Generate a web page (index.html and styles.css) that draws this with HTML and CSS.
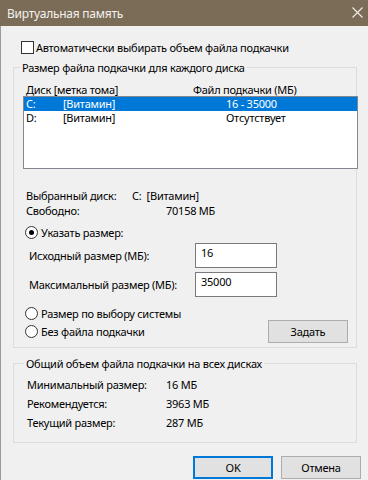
FILE: index.html
```html
<!DOCTYPE html>
<html lang="ru">
<head>
  <meta charset="UTF-8">
  <title>Виртуальная память</title>
  <link rel="stylesheet" href="styles.css">
</head>
<body>
<div class="window">

  <!-- заголовок окна -->
  <div class="titlebar">
    <span class="title">Виртуальная память</span>
    <svg class="close" width="11" height="11" viewBox="0 0 11 11">
      <path d="M0.5 0.5 L10.5 10.5 M10.5 0.5 L0.5 10.5" stroke="#f2efea" stroke-width="1.1" fill="none"/>
    </svg>
  </div>

  <div class="content">
    <div class="auto-row">
      <span class="checkbox"></span>
      <span>Автоматически выбирать объем файла подкачки</span>
    </div>

    <fieldset class="group group-disks">
      <legend>Размер файла подкачки для каждого диска</legend>

      <div class="list-head">
        <span class="col-disk">Диск [метка тома]</span>
        <span>Файл подкачки (МБ)</span>
      </div>

      <div class="listbox">
        <div class="list-row selected">
          <span class="col-letter">C:</span>
          <span class="col-label">[Витамин]</span>
          <span>16 - 35000</span>
        </div>
        <div class="list-row">
          <span class="col-letter">D:</span>
          <span class="col-label">[Витамин]</span>
          <span>Отсутствует</span>
        </div>
      </div>

      <div class="info">
        <div class="info-row">
          <span class="info-label sel">Выбранный диск:</span>
          <span>C:&nbsp;&nbsp;[Витамин]</span>
        </div>
        <div class="info-row">
          <span class="info-label free">Свободно:</span>
          <span>70158 МБ</span>
        </div>
      </div>

      <div class="radio-row first">
        <span class="radio checked"></span>
        <span>Указать размер:</span>
      </div>

      <div class="size-row">
        <span class="size-label">Исходный размер (МБ):</span>
        <div class="input">16</div>
      </div>
      <div class="size-row">
        <span class="size-label">Максимальный размер (МБ):</span>
        <div class="input">35000</div>
      </div>

      <div class="radio-row system">
        <span class="radio"></span>
        <span>Размер по выбору системы</span>
      </div>
      <div class="last-row">
        <div class="radio-row">
          <span class="radio"></span>
          <span>Без файла подкачки</span>
        </div>
        <button class="btn btn-set">Задать</button>
      </div>
    </fieldset>

    <fieldset class="group group-total">
      <legend>Общий объем файла подкачки на всех дисках</legend>
      <div class="total-row">
        <span class="total-label">Минимальный размер:</span>
        <span>16 МБ</span>
      </div>
      <div class="total-row">
        <span class="total-label">Рекомендуется:</span>
        <span>3963 МБ</span>
      </div>
      <div class="total-row">
        <span class="total-label">Текущий размер:</span>
        <span>287 МБ</span>
      </div>
    </fieldset>

    <div class="buttons">
      <button class="btn btn-ok">OK</button>
      <button class="btn">Отмена</button>
    </div>
  </div>

</div>
</body>
</html>
```

FILE: styles.css
```css
html, body {
  margin: 0;
  padding: 0;
  background: #f0f0f0;
}
body {
  font-family: "Noto Sans", "Open Sans", sans-serif;
  font-size: 11px;
  letter-spacing: -0.25px;
  color: #000;
}
.window {
  height: 480px;
  border-left: 1px solid #9a9a9a;
  box-sizing: border-box;
}
.titlebar {
  height: 26px;
  background: #7b6c58;
  color: #f4f1ec;
  display: flex;
  align-items: center;
  justify-content: space-between;
  padding: 0 5px 0 7px;
  font-size: 12px;
  margin-left: -1px;
}
.close {
  margin-top: -1px;
}
.content {
  padding-top: 14px;
}
.auto-row {
  display: flex;
  align-items: center;
  height: 15px;
  padding-left: 20px;
  gap: 2px;
}
.checkbox {
  width: 11px;
  height: 11px;
  border: 1px solid #333;
  background: #fff;
}
.group {
  border: 1px solid #dcdcdc;
  margin: 0 11px 0 12px;
  min-width: 0;
}
.group legend {
  padding: 0 2px;
  margin-left: -3px;
  line-height: 15px;
}
.group-disks {
  margin-top: 5px;
  padding: 9px 0 4px 9px;
}
.list-head {
  display: flex;
  line-height: 12px;
  height: 12px;
  padding-left: 3px;
}
.col-disk {
  width: 167px;
}
.listbox {
  height: 71px;
  margin-right: -2px;
  border: 1px solid #828790;
  background: #fff;
}
.list-row {
  display: flex;
  height: 14px;
  line-height: 14px;
  padding-left: 2px;
}
.list-row.selected {
  background: #0078d7;
  color: #fff;
}
.col-letter {
  width: 37px;
}
.col-label {
  width: 163px;
}
.info {
  margin-top: 19px;
  padding-left: 3px;
}
.info-row {
  display: flex;
  line-height: 15px;
}
.info-label.sel {
  width: 106px;
}
.info-label.free {
  width: 140px;
}
.radio-row {
  display: flex;
  align-items: center;
  height: 13px;
  padding-left: 2px;
  gap: 3px;
}
.radio-row.first {
  margin-top: 8px;
}
.radio {
  width: 11px;
  height: 11px;
  border: 1px solid #333;
  border-radius: 50%;
  background: #fff;
  position: relative;
}
.radio.checked::after {
  content: "";
  position: absolute;
  left: 3px;
  top: 3px;
  width: 5px;
  height: 5px;
  border-radius: 50%;
  background: #000;
}
.size-row {
  display: flex;
  align-items: center;
  margin-top: 4px;
  padding-left: 6px;
}
.size-row:first-of-type {
  margin-top: 0;
}
.size-label {
  width: 166px;
}
.input {
  width: 75px;
  border: 1px solid #7a7a7a;
  background: #fff;
  padding: 1px 0 0 5px;
  height: 22px;
  line-height: 16px;
}
.radio-row.system {
  margin-top: 10px;
}
.last-row {
  display: flex;
  align-items: center;
  justify-content: space-between;
  padding-right: 8px;
}
.btn {
  font-family: "Noto Sans", "Open Sans", sans-serif;
  font-size: 11px;
  letter-spacing: -0.25px;
  width: 80px;
  height: 23px;
  background: #e1e1e1;
  border: 1px solid #adadad;
  color: #000;
  padding: 0;
}
.btn-ok {
  border: 2px solid #0078d7;
}
.group-total {
  margin-top: 8px;
  padding: 4px 0 10px 13px;
}
.total-row {
  display: flex;
  line-height: 19px;
}
.total-label {
  width: 139px;
}
.buttons {
  display: flex;
  justify-content: flex-end;
  gap: 8px;
  margin-top: 13px;
  padding-right: 7px;
}
```
